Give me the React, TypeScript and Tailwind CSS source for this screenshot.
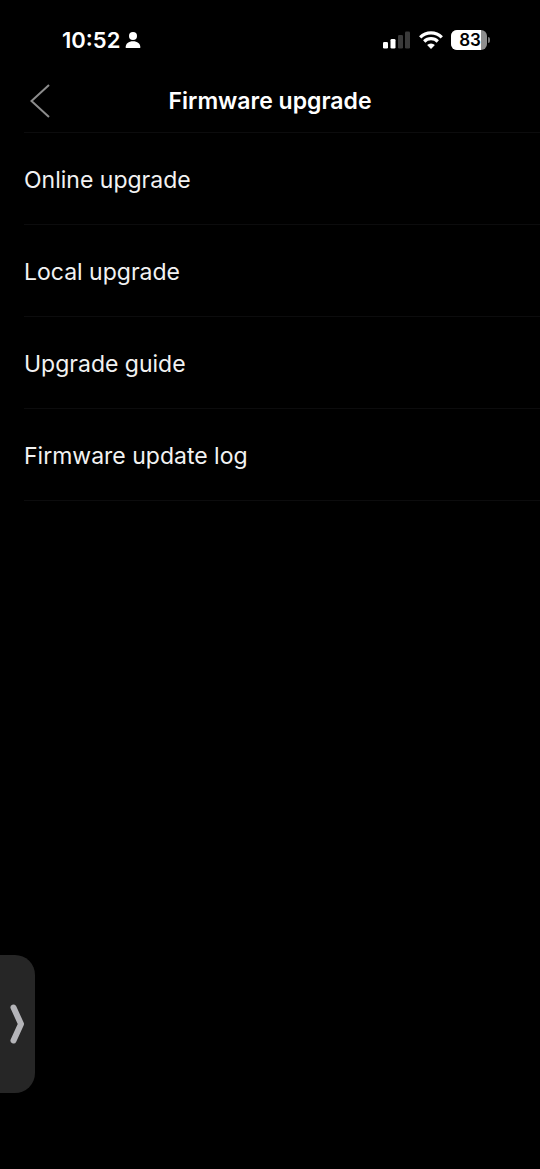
const items = ["Online upgrade", "Local upgrade", "Upgrade guide", "Firmware update log"];

function PersonIcon() {
    return <svg width="16" height="18" viewBox="0 0 16 18" fill="currentColor" aria-hidden="true">
        <circle cx="8" cy="5" r="4" />
        <path d="M0.6 16.6C0.6 12.6 3.6 10.2 8 10.2s7.4 2.4 7.4 6.4c0 .3-.2.4-.5.4H1.1c-.3 0-.5-.1-.5-.4z" />
    </svg>
}

function SignalIcon() {
    return <svg width="28" height="18" viewBox="0 0 28 18" aria-hidden="true">
        <rect x="0" y="11" width="5" height="6.500" rx="1.3" fill="#fff" />
        <rect x="7.5" y="8" width="5" height="9.500" rx="1.3" fill="#fff" />
        <rect x="15" y="4" width="5" height="13.500" rx="1.3" fill="#3a3a3a" />
        <rect x="22" y="0.5" width="5" height="17" rx="1.3" fill="#3a3a3a" />
    </svg>
}

function WifiIcon() {
    return <svg width="24" height="18" viewBox="0 0 24 18" aria-hidden="true">
        <path d="M1.2 6.3a15.4 15.4 0 0 1 21.6 0" fill="none" stroke="#fff" strokeWidth="3.2" />
        <path d="M5.2 10.5a9.7 9.7 0 0 1 13.6 0" fill="none" stroke="#fff" strokeWidth="3.2" />
        <path d="M12 18 L8.100 14.100a5.600 5.600 0 0 1 7.800 0z" fill="#fff" />
    </svg>
}

function Battery({ level }: { level: number }) {
    return <div className="flex items-center gap-px" aria-label={"Battery " + level + "%"}>
        <div className="relative flex h-5 w-9 items-center justify-center overflow-hidden rounded-md bg-[#8e8e8e]">
            <div className="absolute inset-y-0 left-0 bg-white" style={{ width: level + "%" }} />
            <span className="relative pl-0.5 text-[17px] font-semibold leading-5 text-black">{level}</span>
        </div>
        <div className="h-1.5 w-0.5 rounded-r-full bg-[#7a7a7a]" />
    </div>
}

function StatusBar() {
    return <div className="flex items-center justify-between pt-6 pr-[50px] pb-[14px] pl-[62px]">
        <div className="flex h-8 items-center gap-[5px]">
            <span className="text-[22px] font-semibold leading-8">10:52</span>
            <PersonIcon />
        </div>
        <div className="flex items-center gap-2">
            <SignalIcon />
            <WifiIcon />
            <Battery level={83} />
        </div>
    </div>
}

function Header() {
    return <header className="ml-6 grid grid-cols-[40px_1fr_64px] items-center border-b border-[#0c0c0d]">
        <button aria-label="Back" className="flex h-[62px] items-center pl-1.5 text-[#8c8c8c] hover:cursor-pointer">
            <svg width="20" height="34" viewBox="0 0 20 34" fill="none" stroke="currentColor" strokeWidth="2" aria-hidden="true">
                <path d="M19 1 L1.500 17 L19 33" />
            </svg>
        </button>
        <h1 className="text-center text-[23px] font-semibold leading-8">Firmware upgrade</h1>
    </header>
}

export default function App() {
    return <div className="relative min-h-screen bg-black font-['Inter','Liberation_Sans',sans-serif] text-white">
        <StatusBar />
        <Header />
        <ul className="ml-6">
            {items.map((item) => <li key={item} className="border-b border-[#0c0c0d]">
                <button className="flex h-[91px] w-full items-center pt-0.5 text-left text-[23px] leading-8 text-[#f2f2f2] hover:cursor-pointer">{item}</button>
            </li>)}
        </ul>
        <button aria-label="Open side panel" className="absolute bottom-[76px] left-0 flex h-[138px] w-[35px] items-center rounded-r-[20px] bg-[#262626] pl-2 text-[#b4b4b8] hover:cursor-pointer">
            <svg width="17" height="42" viewBox="0 0 17 42" fill="none" stroke="currentColor" strokeWidth="6" strokeLinecap="round" strokeLinejoin="round" aria-hidden="true">
                <path d="M5.500 4.500 L13 21 L5.500 37.500" />
            </svg>
        </button>
    </div>
}
